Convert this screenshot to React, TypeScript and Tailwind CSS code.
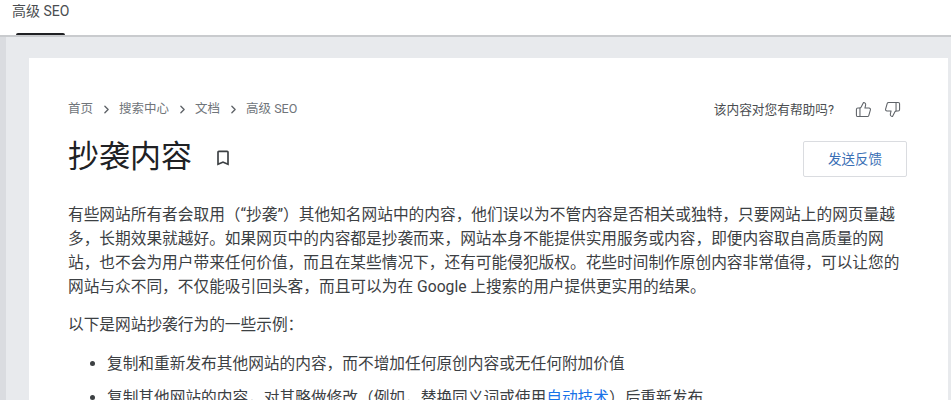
import React from 'react';
import { ChevronRight, ThumbsUp, ThumbsDown } from 'lucide-react';

const font = "font-['Roboto','Noto_Sans_CJK_SC',sans-serif]";

const crumbs = ['首页', '搜索中心', '文档', '高级 SEO'];

const App: React.FC = () => {
  return (
    <div className={`${font} h-[400px] w-[951px] overflow-hidden bg-[#e8eaed] text-[#3c4043]`}>
      {/* Tab bar */}
      <div className="h-[35px] bg-white">
        <div className="ml-[16px] w-[49px] h-[35px] relative">
          <span className="absolute -left-[4px] top-[2px] whitespace-nowrap text-[14px] leading-[18px] text-[#4a4d50]">高级 SEO</span>
          <div className="absolute bottom-0 left-0 h-[2px] w-[49px] rounded-t-sm bg-[#202124]" />
        </div>
      </div>
      <div className="h-[2px] bg-[#c9cbce]" />

      <div className="flex h-[363px]">
        <div className="w-[6px] bg-[#dadce0]" />
        <div className="flex-1 pl-[23px] pt-[21px] pr-[3px]">
          <div className="h-[400px] bg-white pl-[39px] pr-[41px] pt-[41px]">
            {/* Breadcrumb + feedback */}
            <div className="flex items-center justify-between h-[20px] pt-[1px]">
              <div className="flex items-center text-[12.5px] text-[#70757a]">
                {crumbs.map((c, i) => (
                  <React.Fragment key={c}>
                    {i > 0 && <ChevronRight className="mx-[6.5px] h-[13px] w-[13px] text-[#5f6368]" strokeWidth={2.5} />}
                    <span>{c}</span>
                  </React.Fragment>
                ))}
              </div>
              <div className="flex items-center text-[12.7px] text-[#4a4d50]">
                <span>该内容对您有帮助吗?</span>
                <ThumbsUp className="ml-[21px] h-[17px] w-[17px] text-[#5f6368]" strokeWidth={1.5} />
                <ThumbsDown className="ml-[12px] mr-[6px] h-[17px] w-[17px] text-[#5f6368]" strokeWidth={1.5} />
              </div>
            </div>

            {/* Title row */}
            <div className="mt-[13px] flex items-start justify-between">
              <div className="flex items-center">
                <h1 className="text-[31px] leading-[50px] font-normal text-[#202124]">抄袭内容</h1>
                <svg viewBox="0 0 24 24" className="ml-[21px] mt-[2px] h-[20px] w-[20px] fill-[#3c4043]">
                  <path d="M17 3H7c-1.1 0-2 .9-2 2v16l7-3 7 3V5c0-1.1-.9-2-2-2zm0 15l-5-2.18L7 18V5h10v13z" />
                </svg>
              </div>
              <button className="mt-[9px] h-[36px] w-[104px] rounded-[2px] border border-[#dadce0] bg-white text-[13.5px] text-[#3a6fb5]">
                发送反馈
              </button>
            </div>

            {/* Body */}
            <div className="mt-[21px] text-[15.7px] leading-[24px] text-[#3c4043]">
              <p>
                有些网站所有者会取用（“抄袭”）其他知名网站中的内容，他们误以为不管内容是否相关或独特，只要网站上的网页量越多，长期效果就越好。如果网页中的内容都是抄袭而来，网站本身不能提供实用服务或内容，即便内容取自高质量的网站，也不会为用户带来任何价值，而且在某些情况下，还有可能侵犯版权。花些时间制作原创内容非常值得，可以让您的网站与众不同，不仅能吸引回头客，而且可以为在 Google 上搜索的用户提供更实用的结果。
              </p>
              <p className="mt-[14px]">以下是网站抄袭行为的一些示例：</p>
              <ul className="mt-[15px] list-disc pl-[39px] space-y-[10px]">
                <li>复制和重新发布其他网站的内容，而不增加任何原创内容或无任何附加价值</li>
                <li>
                  复制其他网站的内容，对其略做修改（例如，替换同义词或使用<span className="text-[#1a73e8]">自动技术</span>）后重新发布
                </li>
              </ul>
            </div>
          </div>
        </div>
      </div>
    </div>
  );
};

export default App;
